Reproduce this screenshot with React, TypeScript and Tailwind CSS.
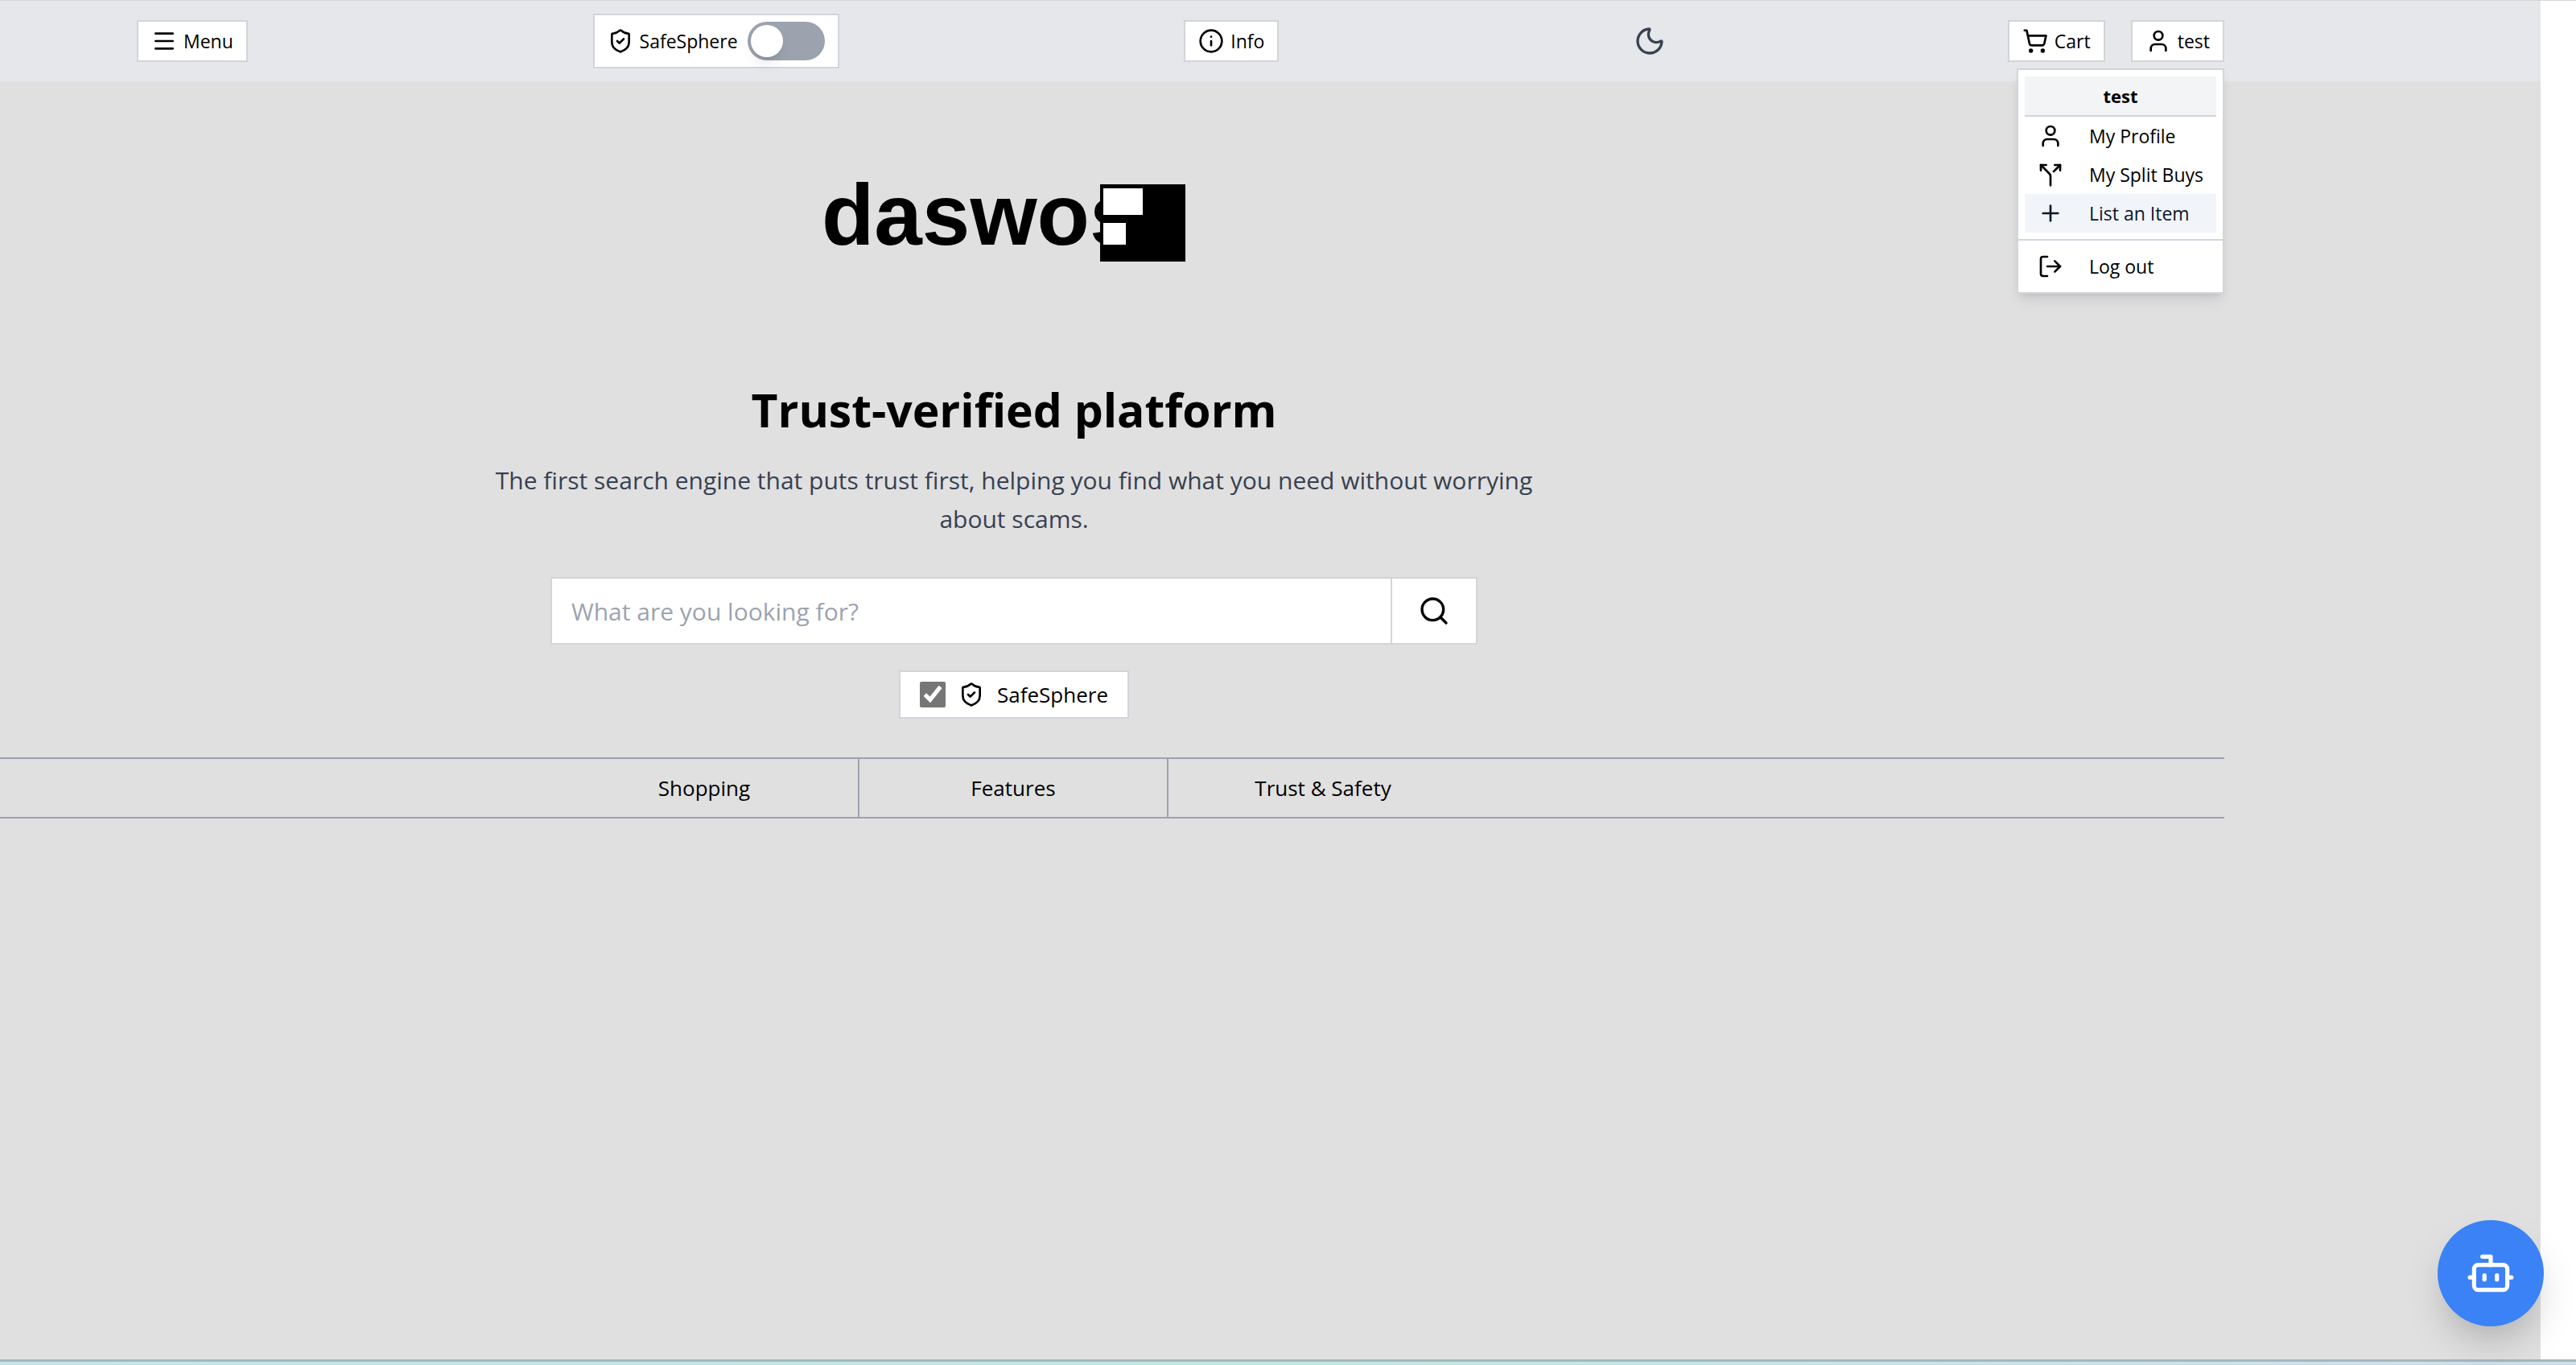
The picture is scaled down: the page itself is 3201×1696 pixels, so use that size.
import { Bot, Info, LogOut, Menu, Moon, Plus, Search, ShieldCheck, ShoppingCart, Split, User } from "lucide-react";

const boxed = "flex items-center gap-2 border-2 border-[#d1d5db] bg-white px-4 py-2 text-[23px] leading-8 whitespace-nowrap text-black";

function Logo() {
  return (
    <svg viewBox="0 0 480 120" className="h-[120px] w-[480px]" role="img" aria-label="daswos">
      <text x="1" y="90" fontSize="107" fontWeight="700" className="font-['Liberation_Sans',sans-serif]">daswos</text>
      <rect x="347" y="15" width="106" height="96" />
      <rect x="351" y="20" width="49" height="33" fill="#fff" />
      <rect x="351" y="63" width="28" height="27" fill="#fff" />
    </svg>
  );
}

function UserMenu() {
  const item = "flex h-12 w-full items-center gap-8 px-4 text-[23px] leading-8 whitespace-nowrap";
  return (
    <div className="absolute top-[60px] right-0 z-10 w-[258px] border-2 border-[#d1d5db] bg-white py-2 text-black shadow-lg">
      <div className="px-2">
        <div className="h-[50px] border-b-2 border-[#d1d5db] bg-[#f3f4f6] text-center text-[22px] leading-[48px] font-bold">test</div>
        <button className={item}><User className="size-8 shrink-0" />My Profile</button>
        <button className={item}><Split className="size-8 shrink-0" />My Split Buys</button>
        <button className={item + " bg-[#f1f5f9] text-[#0f172a]"}><Plus className="size-8 shrink-0" />List an Item</button>
      </div>
      <hr className="my-2 border-t-2 border-[#d1d5db]" />
      <div className="px-2">
        <button className={item}><LogOut className="size-8 shrink-0" />Log out</button>
      </div>
    </div>
  );
}

export default function App() {
  return (
    <div className="flex min-h-screen flex-col bg-white font-['Open_Sans','Noto_Sans',sans-serif] text-black">
      <div className="mr-11 flex grow flex-col bg-[#e0e0e0]">
        <header className="-mr-11 border-t border-[#d6d6d6] pr-11">
          <div className="flex h-[100px] items-center justify-between bg-[#e5e7eb] pr-[393px] pl-[170px]">
            <button className={boxed}><Menu className="size-8" />Menu</button>
            <div className={boxed}>
              <ShieldCheck className="size-8" />
              <span id="sphere">SafeSphere</span>
              <button role="switch" aria-checked="false" aria-labelledby="sphere" className="ml-1 flex h-12 w-24 items-center rounded-full bg-[#9ca3af] p-1">
                <span className="size-10 rounded-full bg-white shadow-lg" />
              </button>
            </div>
            <button className={boxed}><Info className="size-8" />Info</button>
            <button aria-label="Dark mode" className="-mr-4 flex w-16 justify-center text-[#374151]"><Moon className="size-10" /></button>
            <div className="relative flex gap-8">
              <button className={boxed}><ShoppingCart className="size-8" />Cart</button>
              <button className={boxed}><User className="size-8" />test</button>
              <UserMenu />
            </div>
          </div>
        </header>
        <main className="mr-[393px]">
          <div className="flex flex-col items-center pt-[113px] pr-[244px] text-center">
            <Logo />
            <h1 className="mt-[135px] text-[57px] leading-[80px] font-bold">Trust-verified platform</h1>
            <p className="mt-6 w-[1344px] max-w-full text-[30px] leading-[48px] text-[#374151]">
              The first search engine that puts trust first, helping you find what you need without worrying about scams.
            </p>
            <form className="mt-12 flex h-[84px] w-[1152px] max-w-full border-2 border-[#d1d5db] bg-white">
              <input type="text" aria-label="Search" placeholder="What are you looking for?" className="min-w-0 grow px-6 text-[30px] outline-none placeholder:text-[#9ca3af]" />
              <button type="button" aria-label="Submit search" className="flex items-center border-l-2 border-[#d1d5db] px-8"><Search className="size-10" /></button>
            </form>
            <label className="mt-8 flex h-[60px] items-center gap-4 border-2 border-[#d1d5db] bg-white px-6 text-[26px]">
              <input type="checkbox" defaultChecked className="size-8 accent-[#767676]" />
              <ShieldCheck className="size-8" />
              SafeSphere
            </label>
          </div>
          <nav className="mt-12 flex justify-center border-y-2 border-[#9ca3af] pr-[244px] text-[26px] leading-[72px]">
            <a href="#shopping" className="w-96 border-r-2 border-[#9ca3af] text-center">Shopping</a>
            <a href="#features" className="w-96 border-r-2 border-[#9ca3af] text-center">Features</a>
            <a href="#trust" className="w-96 text-center">Trust &amp; Safety</a>
          </nav>
        </main>
      </div>
      <footer className="h-[7px] border-t-3 border-[#a5b8bb] bg-linear-to-r from-[#c5e5e9] via-[#c0e9e3] to-[#cfdeed]" />
      <button aria-label="Open assistant" className="fixed right-10 bottom-12 flex size-[132px] items-center justify-center rounded-full bg-[#3b82f6] text-white shadow-2xl">
        <Bot className="size-[62px]" />
      </button>
    </div>
  );
}
